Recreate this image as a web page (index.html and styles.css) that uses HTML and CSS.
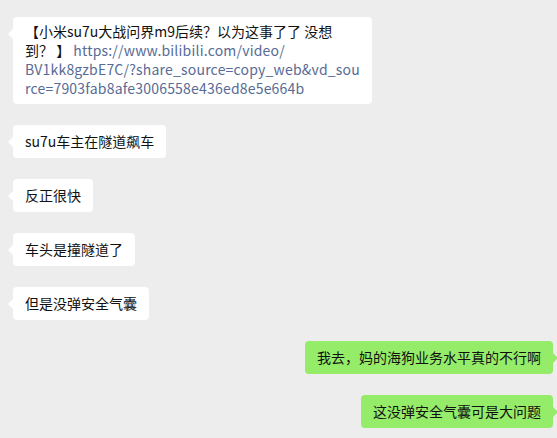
FILE: index.html
```html
<!DOCTYPE html>
<html lang="zh-CN">
<head>
    <meta charset="UTF-8">
    <meta name="viewport" content="width=device-width, initial-scale=1.0">
    <title>聊天记录</title>
    <link rel="stylesheet" href="styles.css">
</head>
<body>
    <div class="chat">
        <div class="msg msg-left">
            <div class="bubble bubble-long">【小米su7u大战问界m9后续？以为这事了了 没想<br>到？ 】 <a class="link" href="#">https://www.bilibili.com/video/<br>BV1kk8gzbE7C/?share_source=copy_web&amp;vd_sou<br>rce=7903fab8afe3006558e436ed8e5e664b</a></div>
        </div>
        <div class="msg msg-left">
            <div class="bubble">su7u车主在隧道飙车</div>
        </div>
        <div class="msg msg-left">
            <div class="bubble">反正很快</div>
        </div>
        <div class="msg msg-left">
            <div class="bubble">车头是撞隧道了</div>
        </div>
        <div class="msg msg-left">
            <div class="bubble">但是没弹安全气囊</div>
        </div>
        <div class="msg msg-right">
            <div class="bubble">我去，妈的海狗业务水平真的不行啊</div>
        </div>
        <div class="msg msg-right">
            <div class="bubble">这没弹安全气囊可是大问题</div>
        </div>
    </div>
</body>
</html>
```

FILE: styles.css
```css
body {
    margin: 0;
    padding: 0;
    background-color: #ededed;
    font-family: "Noto Sans CJK SC", "Microsoft YaHei", sans-serif;
    font-size: 14px;
    color: #111;
}
.chat {
    display: flex;
    flex-direction: column;
    gap: 21px;
    padding: 17px 4px 17px 13px;
}
.msg {
    display: flex;
}
.msg-left {
    justify-content: flex-start;
}
.msg-right {
    justify-content: flex-end;
}
.bubble {
    position: relative;
    padding: 7px 12px;
    line-height: 19px;
    border-radius: 4px;
    background-color: #fff;
    white-space: nowrap;
}
.bubble-long {
    padding: 5px 12px 6px;
}
.msg-right .bubble {
    background-color: #95ec69;
}
.bubble::before {
    content: "";
    position: absolute;
    top: 12px;
    width: 0;
    height: 0;
    border-top: 5px solid transparent;
    border-bottom: 5px solid transparent;
}
.msg-left .bubble::before {
    left: -5px;
    border-right: 5px solid #fff;
}
.msg-right .bubble::before {
    right: -5px;
    border-left: 5px solid #95ec69;
}
.link {
    color: #576b95;
    text-decoration: none;
    letter-spacing: 0.2px;
}
```
